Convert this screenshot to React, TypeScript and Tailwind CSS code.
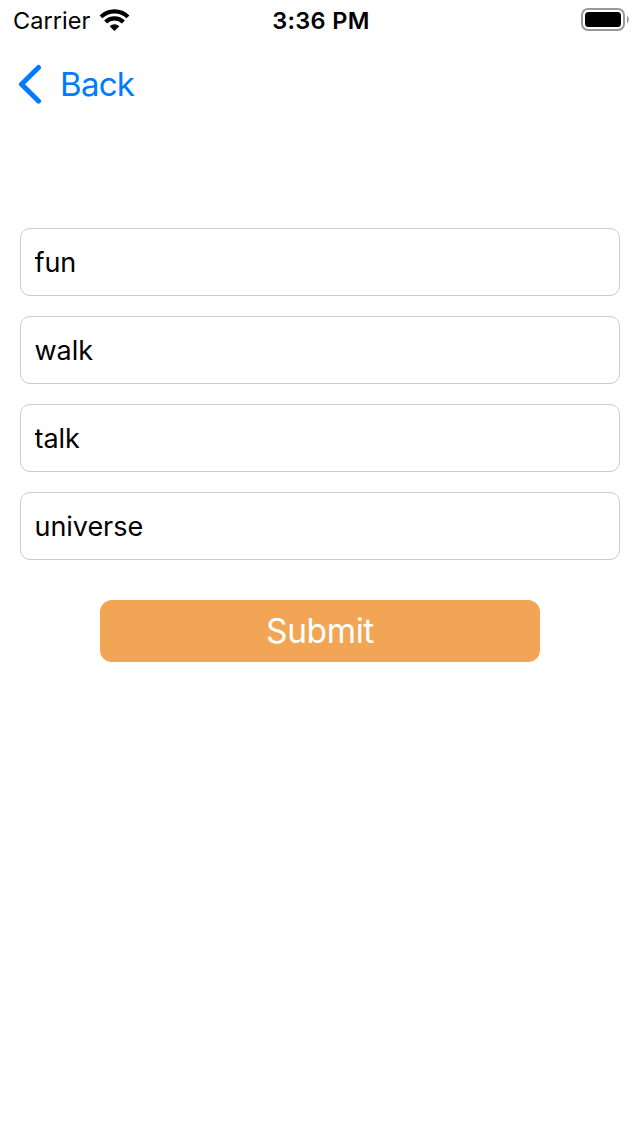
const words = ["fun", "walk", "talk", "universe"];

function StatusBar() {
  return (
    <header className="grid h-10 grid-cols-3 items-center pl-[13px] pr-[11px] text-black">
      <div className="flex items-center gap-[9px]">
        <span className="pt-0.5 text-[23.5px] leading-[38px] tracking-[0.05px]">Carrier</span>
        <svg width="31" height="22" viewBox="0 0 31 22" fill="none" stroke="#000">
          <path d="M2 7.9a19.2 19.2 0 0 1 27 0" strokeWidth="4.1" />
          <path d="M6.6 13a12.6 12.6 0 0 1 17.8 0" strokeWidth="4.2" />
          <path d="M15.5 22l-4.9-4.8a7 7 0 0 1 9.8 0z" fill="#000" stroke="none" />
        </svg>
      </div>
      <span className="pt-0.5 text-center text-[23.5px] font-semibold leading-[38px] tracking-[0.35px]">3:36 PM</span>
      <svg className="justify-self-end" width="48" height="24" viewBox="0 0 48 24">
        <rect x="1" y="1" width="42" height="21" rx="6" fill="none" stroke="#999" strokeWidth="2" />
        <rect x="4" y="4" width="36" height="15" rx="3.5" fill="#000" />
        <path d="M46 7.8c2.4 1.2 2.4 6.4 0 7.6z" fill="#999" />
      </svg>
    </header>
  );
}

export default function App() {
  return (
    <div className="flex h-[1136px] w-[640px] flex-col bg-white font-['Inter',sans-serif]">
      <StatusBar />
      <nav className="flex h-[88px] items-center pl-[18px]">
        <button className="flex items-center gap-[18px] text-[#007aff]">
          <svg width="24" height="40" viewBox="0 0 24 40" fill="none" stroke="currentColor" strokeWidth="5" strokeLinecap="round" strokeLinejoin="round">
            <path d="M20.5 3.5L3.5 20.3l17 16.7" />
          </svg>
          <span className="text-[33px] leading-[38px] tracking-[-0.7px]">Back</span>
        </button>
      </nav>
      <form className="mt-[100px] flex flex-col gap-5 px-5">
        {words.map((word) => (
          <input
            key={word}
            defaultValue={word}
            className="h-[68px] rounded-[10px] border border-[#cdcdcd] bg-white px-[13.5px] text-[27px] tracking-[-0.05px] text-black outline-none"
          />
        ))}
        <button type="button" className="mt-5 h-[62px] w-[440px] self-center rounded-xl bg-[#f2a655] pt-px text-[33.5px] leading-none tracking-[-0.4px] text-white">
          Submit
        </button>
      </form>
    </div>
  );
}
